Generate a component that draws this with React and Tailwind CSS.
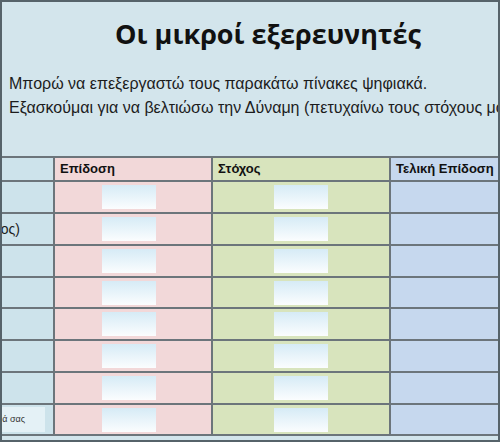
import React from 'react';

const rows = [
  { label: '' },
  { label: 'Άλματα (πλήθος)' },
  { label: '' },
  { label: '' },
  { label: '' },
  { label: '' },
  { label: '' },
  { label: 'input' },
];

const line = 'border-[#6c757b]';

// κουτάκι εισαγωγής με απαλή διαβάθμιση
const Box = () => (
  <div className="w-[54px] h-[24px] bg-gradient-to-b from-[#d6ebf6] to-[#fbfdfe]" />
);

export default function App() {
  return (
    <div
      className="w-[500px] h-[442px] overflow-hidden border-2 border-[#56636a] bg-[#d3e5ec] flex flex-col"
      style={{ fontFamily: '"Liberation Sans", Arial, sans-serif' }}
    >
      <h1
        className="pl-[36px] pt-[12px] h-[70px] text-center text-[27px] font-bold text-[#111] whitespace-nowrap"
        style={{ fontFamily: '"Open Sans", "Noto Sans", sans-serif' }}
      >
        Οι μικροί εξερευνητές
      </h1>
      <div className="pl-[7px] text-[16px] leading-[24px] text-[#1c1c1c] whitespace-nowrap">
        <p>Μπορώ να επεξεργαστώ τους παρακάτω πίνακες ψηφιακά.</p>
        <p>Εξασκούμαι για να βελτιώσω την Δύναμη (πετυχαίνω τους στόχους μου)</p>
      </div>

      <div className={`mt-[36px] ml-[-152px] w-[720px] border-t-2 ${line}`}>
        {/* κεφαλίδα */}
        <div className={`flex h-[24px] border-b-2 ${line} text-[13px] font-bold text-[#111]`}>
          <div className={`w-[205px] bg-[#cde3eb] border-r-2 ${line}`} />
          <div className={`w-[158px] bg-[#f2d8d9] border-r-2 ${line} pl-[5px] flex items-center`}>Επίδοση</div>
          <div className={`w-[178px] bg-[#d8e4bd] border-r-2 ${line} pl-[5px] flex items-center`}>Στόχος</div>
          <div className="flex-1 bg-[#c6d8ee] pl-[5px] flex items-center whitespace-nowrap">Τελική Επίδοση</div>
        </div>

        {rows.map((r, i) => (
          <div key={i} className={`flex ${i % 4 === 3 ? 'h-[31px]' : 'h-[32px]'} border-b-2 ${line}`}>
            <div className={`w-[205px] bg-[#cde3eb] border-r-2 ${line} flex items-center justify-end`}>
              {r.label === 'input' ? (
                <div className="w-[110px] h-[25px] mr-[8px] bg-[#e4f1f6] flex items-center justify-end pr-[20px] text-[9px] text-[#333] whitespace-nowrap">
                  Γράψε το όνομά σας
                </div>
              ) : (
                <span className="pr-[33px] text-[14px] text-[#1c1c1c] whitespace-nowrap">{r.label}</span>
              )}
            </div>
            <div className={`w-[158px] bg-[#f2d8d9] border-r-2 ${line} pl-[47px] pt-[3px]`}>
              <Box />
            </div>
            <div className={`w-[178px] bg-[#d8e4bd] border-r-2 ${line} pl-[61px] pt-[3px]`}>
              <Box />
            </div>
            <div className="flex-1 bg-[#c6d8ee]" />
          </div>
        ))}
      </div>
    </div>
  );
}
